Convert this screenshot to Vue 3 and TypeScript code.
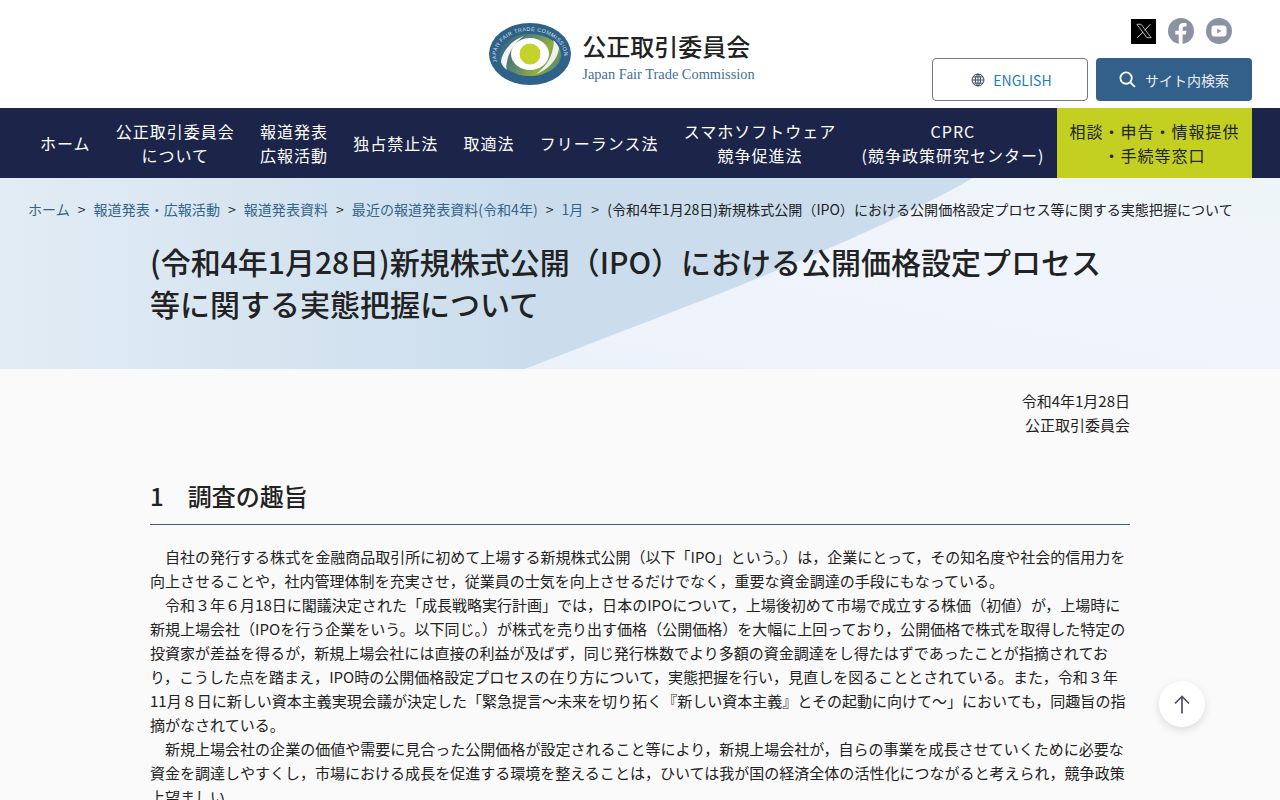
<template>
  <div class="page">
    <header class="head">
      <a class="brand">
        <svg class="logo" viewBox="0 0 84 64" width="84" height="64">
          <defs>
            <linearGradient id="sw" x1="0" y1="0.2" x2="1" y2="0.6">
              <stop offset="0" stop-color="#2f6289" />
              <stop offset="0.45" stop-color="#5f8a6a" />
              <stop offset="0.75" stop-color="#93ad3f" />
              <stop offset="1" stop-color="#5c8a72" />
            </linearGradient>
            <path id="arc" d="M9 40 A34 25 0 1 1 76 34" />
          </defs>
          <ellipse cx="42" cy="32" rx="41" ry="31" fill="#2f6289" />
          <ellipse cx="42" cy="33" rx="31" ry="21" fill="url(#sw)" />
          <path d="M13 40C14 29 24 18 36 14C28 20 21 28 19 40C18 44 18 46 19 48C16 46 14 43 13 40Z" fill="#f2f5f4" />
          <path d="M71 26C70 37 60 48 48 52C56 46 63 38 65 26C66 22 66 20 65 18C68 20 70 23 71 26Z" fill="#edf1e6" />
          <ellipse cx="42" cy="32" rx="19" ry="16" fill="#fff" />
          <circle cx="42" cy="32" r="10.5" fill="#c4d32a" />
          <text class="logo-arc"><textPath href="#arc" textLength="99" lengthAdjust="spacing">JAPAN FAIR TRADE COMMISSION</textPath></text>
        </svg>
        <div class="brand-text">
          <div class="brand-ja">公正取引委員会</div>
          <div class="brand-en">Japan Fair Trade Commission</div>
        </div>
      </a>
      <div class="tools">
        <div class="sns">
          <span class="x-box">
            <svg viewBox="0 0 24 24" width="18" height="18">
              <path d="M2.500 3h5.600l13.400 18h-5.600z" fill="none" stroke="#d8d8d8" stroke-width="1.100" />
              <path d="M20.500 3l-7.600 8.200M10.800 13.400L3 21" fill="none" stroke="#d8d8d8" stroke-width="1.300" />
            </svg>
          </span>
          <svg viewBox="0 0 26 26" width="26" height="26">
            <circle cx="13" cy="13" r="13" fill="#8b92a3" />
            <path d="M14.600 26v-9.400h3.200l.6-3.800h-3.800v-2.300c0-1.100.5-2 2.100-2h1.800V5.300c-.9-.1-1.900-.3-2.900-.3-3 0-4.900 1.800-4.900 5v2.800H7.300v3.800h3.400V26z" fill="#fff" />
          </svg>
          <svg viewBox="0 0 26 26" width="26" height="26">
            <circle cx="13" cy="13" r="13" fill="#8b92a3" />
            <rect x="5.500" y="7.500" width="15" height="11" rx="3" fill="#fff" />
            <path d="M11.300 10.500l4 2.500-4 2.500z" fill="#8b92a3" />
          </svg>
        </div>
        <div class="btns">
          <a class="btn-en">
            <svg viewBox="0 0 16 16" width="14" height="14">
              <g fill="none" stroke="#3a4560" stroke-width="1.100">
                <circle cx="8" cy="8" r="6.800" />
                <ellipse cx="8" cy="8" rx="3" ry="6.800" />
                <path d="M8 1.200v13.600M1.200 8h13.600M2.200 4.500h11.600M2.200 11.500h11.600" />
              </g>
            </svg>
            <span>ENGLISH</span>
          </a>
          <a class="btn-search">
            <svg viewBox="0 0 18 18" width="17" height="17">
              <circle cx="7.500" cy="7.500" r="6" fill="none" stroke="#fff" stroke-width="1.900" />
              <path d="M12 12l4.800 4.800" stroke="#fff" stroke-width="2" />
            </svg>
            <span>サイト内検索</span>
          </a>
        </div>
      </div>
    </header>

    <nav class="gnav">
      <a v-for="item in navItems" :key="item.join()" class="gnav-item">
        <span v-for="line in item" :key="line">{{ line }}</span>
      </a>
      <a class="gnav-consult"><span>相談・申告・情報提供</span><span>・手続等窓口</span></a>
    </nav>

    <section class="hero">
      <svg class="hero-bg" viewBox="0 0 1280 191" width="1280" height="191" preserveAspectRatio="none">
        <defs>
          <linearGradient id="heroL" x1="0" y1="0" x2="1" y2="0">
            <stop offset="0" stop-color="#e2ecf4" />
            <stop offset="0.55" stop-color="#cbdded" />
            <stop offset="1" stop-color="#cbdded" />
          </linearGradient>
          <linearGradient id="heroR" x1="0" y1="1" x2="1" y2="0.2">
            <stop offset="0" stop-color="#e6f1f8" />
            <stop offset="0.4" stop-color="#eef3fc" />
            <stop offset="0.75" stop-color="#f0f4fc" />
            <stop offset="1" stop-color="#eef5f8" />
          </linearGradient>
        </defs>
        <rect width="1280" height="191" fill="url(#heroR)" />
        <path d="M0 0H973C850 70 680 130 525 191H0Z" fill="url(#heroL)" />
      </svg>
      <ol class="crumbs">
        <li v-for="c in crumbs" :key="c"><a>{{ c }}</a><i>&gt;</i></li>
        <li class="current">(令和4年1月28日)新規株式公開（IPO）における公開価格設定プロセス等に関する実態把握について</li>
      </ol>
      <h1 class="title">(令和4年1月28日)新規株式公開（IPO）における公開価格設定プロセス等に関する実態把握について</h1>
    </section>

    <main class="body">
      <div class="meta">
        <p>令和4年1月28日</p>
        <p>公正取引委員会</p>
      </div>
      <h2 class="sec">1　調査の趣旨</h2>
      <p v-for="p in paragraphs" :key="p" class="para">{{ p }}</p>
    </main>

    <a class="totop">
      <svg viewBox="0 0 16 19" width="16" height="19">
        <path d="M8 18.500V1.500M1 8.500l7-7 7 7" fill="none" stroke="#4a5273" stroke-width="1.700" />
      </svg>
    </a>
  </div>
</template>

<script setup lang="ts">
const navItems: string[][] = [
  ['ホーム'],
  ['公正取引委員会', 'について'],
  ['報道発表', '広報活動'],
  ['独占禁止法'],
  ['取適法'],
  ['フリーランス法'],
  ['スマホソフトウェア', '競争促進法'],
  ['CPRC', '(競争政策研究センター)']
]

const crumbs: string[] = ['ホーム', '報道発表・広報活動', '報道発表資料', '最近の報道発表資料(令和4年)', '1月']

const paragraphs: string[] = [
  '　自社の発行する株式を金融商品取引所に初めて上場する新規株式公開（以下「IPO」という。）は，企業にとって，その知名度や社会的信用力を向上させることや，社内管理体制を充実させ，従業員の士気を向上させるだけでなく，重要な資金調達の手段にもなっている。',
  '　令和３年６月18日に閣議決定された「成長戦略実行計画」では，日本のIPOについて，上場後初めて市場で成立する株価（初値）が，上場時に新規上場会社（IPOを行う企業をいう。以下同じ。）が株式を売り出す価格（公開価格）を大幅に上回っており，公開価格で株式を取得した特定の投資家が差益を得るが，新規上場会社には直接の利益が及ばず，同じ発行株数でより多額の資金調達をし得たはずであったことが指摘されており，こうした点を踏まえ，IPO時の公開価格設定プロセスの在り方について，実態把握を行い，見直しを図ることとされている。また，令和３年11月８日に新しい資本主義実現会議が決定した「緊急提言～未来を切り拓く『新しい資本主義』とその起動に向けて～」においても，同趣旨の指摘がなされている。',
  '　新規上場会社の企業の価値や需要に見合った公開価格が設定されること等により，新規上場会社が，自らの事業を成長させていくために必要な資金を調達しやすくし，市場における成長を促進する環境を整えることは，ひいては我が国の経済全体の活性化につながると考えられ，競争政策上望ましい。'
]
</script>

<style scoped>
.page {
  height: 800px;
  overflow: hidden;
  background: #fafafa;
  color: #222;
  font-family: "Noto Sans CJK JP", "Noto Sans", sans-serif;
}

a {
  text-decoration: none;
  cursor: pointer;
}

.head {
  height: 108px;
  background: #fff;
  position: relative;
  display: flex;
  justify-content: center;
}

.brand {
  display: flex;
  align-items: flex-start;
  gap: 10px;
  padding: 22px 37px 0 0;
}

.logo-arc {
  font: 5.400px "Liberation Sans", sans-serif;
  fill: #d5e1ea;
}

.brand-ja {
  font-size: 24px;
  line-height: 30px;
  font-weight: 500;
  margin-top: 9px;
  color: #222;
}

.brand-en {
  font: 14.400px/20px "Liberation Serif", serif;
  color: #3f7199;
  margin-top: 3px;
}

.tools {
  position: absolute;
  right: 28px;
  top: 18px;
  display: flex;
  flex-direction: column;
  align-items: flex-end;
  gap: 14px;
}

.sns {
  display: flex;
  align-items: center;
  gap: 12px;
  padding-right: 20px;
}

.x-box {
  width: 25px;
  height: 25px;
  background: #000;
  display: flex;
  align-items: center;
  justify-content: center;
}

.btns {
  display: flex;
  gap: 8px;
}

.btn-en,
.btn-search {
  height: 43px;
  box-sizing: border-box;
  border-radius: 4px;
  display: flex;
  align-items: center;
  justify-content: center;
  font-size: 14px;
}

.btn-en {
  width: 156px;
  padding-left: 3px;
  border: 1px solid #77797c;
  background: #fff;
  color: #1a7fb5;
  gap: 8px;
}

.btn-search {
  width: 156px;
  background: #33608a;
  color: #e8eef3;
  gap: 9px;
}

.gnav {
  height: 70px;
  background: #1c2549;
  display: flex;
  justify-content: flex-end;
  padding-right: 28px;
}

.gnav-item {
  display: flex;
  flex-direction: column;
  align-items: center;
  justify-content: center;
  padding: 0 12.630px;
  color: #fff;
  font-size: 16px;
  line-height: 24px;
  letter-spacing: 1px;
  white-space: nowrap;
}

.gnav-consult {
  width: 195px;
  background: #c3d022;
  color: #222;
  display: flex;
  flex-direction: column;
  align-items: center;
  justify-content: center;
  font-size: 16px;
  line-height: 24px;
  letter-spacing: 1px;
  white-space: nowrap;
}

.hero {
  height: 191px;
  box-sizing: border-box;
  padding-top: 20px;
  position: relative;
  overflow: hidden;
}

.hero-bg {
  position: absolute;
  left: 0;
  top: 0;
}

.crumbs {
  position: relative;
  list-style: none;
  margin: 0;
  padding: 0 0 0 28px;
  display: flex;
  font-size: 14.050px;
  line-height: 22px;
  white-space: nowrap;
}

.crumbs a {
  color: #33658c;
}

.crumbs i {
  font-style: normal;
  margin: 0 8px;
  color: #222;
}

.title {
  position: relative;
  width: 980px;
  margin: 20px auto 0;
  font-size: 30px;
  line-height: 42px;
  font-weight: 500;
  color: #222;
}

.body {
  width: 980px;
  margin: 0 auto;
  padding-top: 20px;
}

.meta {
  text-align: right;
  font-size: 15px;
  line-height: 24px;
}

.meta p {
  margin: 0;
}

.sec {
  margin: 41px 0 20px;
  padding-bottom: 10px;
  border-bottom: 1px solid #33608a;
  font-size: 24px;
  line-height: 36px;
  font-weight: 500;
}

.para {
  margin: 0;
  font-size: 15.020px;
  line-height: 24px;
}

.totop {
  position: fixed;
  left: 1159px;
  top: 681px;
  width: 46px;
  height: 46px;
  border-radius: 50%;
  background: #fff;
  box-shadow: 0 3px 8px rgba(0, 0, 0, 0.12);
  display: flex;
  align-items: center;
  justify-content: center;
}
</style>
